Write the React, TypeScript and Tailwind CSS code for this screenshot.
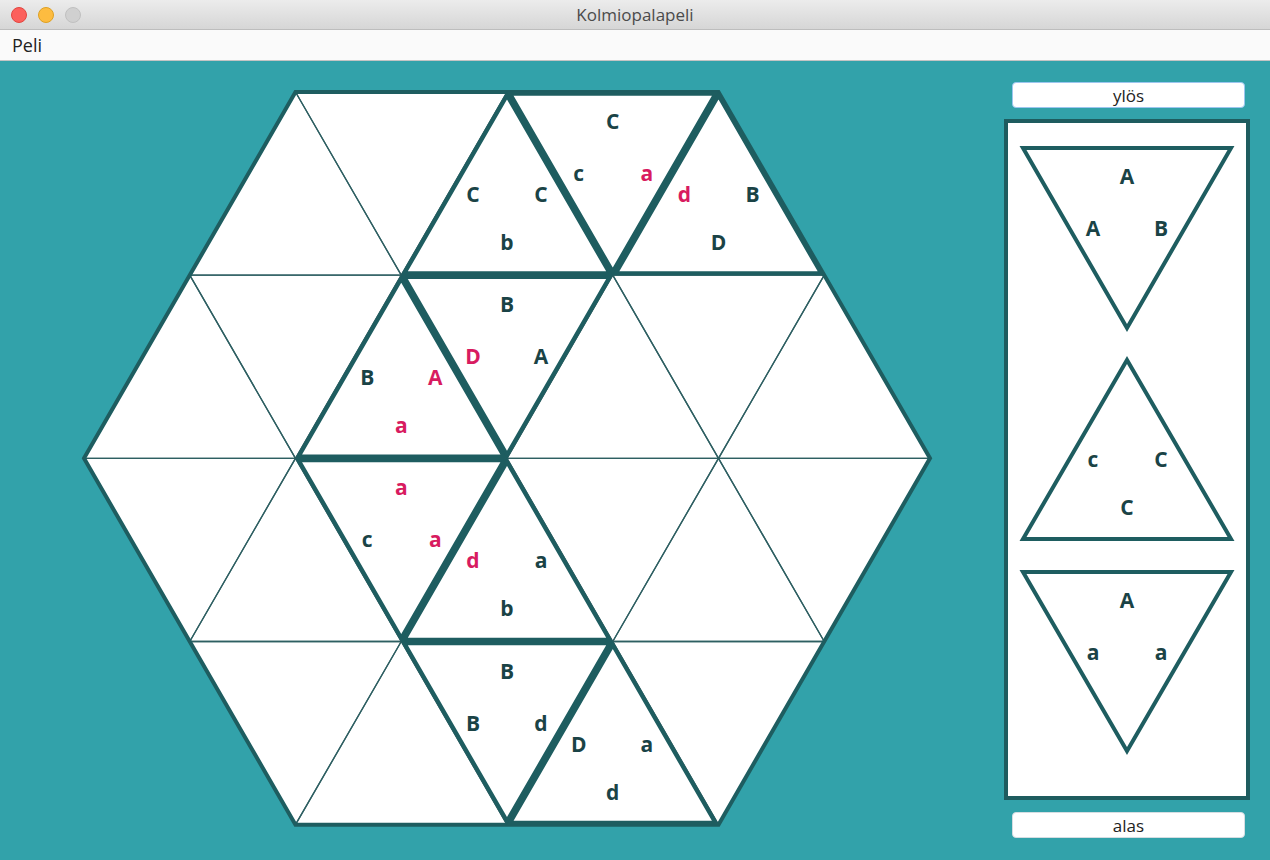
import React from 'react';

type Pt = [number, number];
type Label = { t: string; red?: boolean };
type Piece = { kind: 'up' | 'down'; pts: Pt[]; labels: Label[] };

const S = 211.5;
const H = (S * Math.sqrt(3)) / 2;
const CX = 507;
const Y0 = 92;
const COUNTS = [3, 4, 5, 4, 3];

const DARK = '#1e5d60';
const TEXT = '#1a4346';
const RED = '#d81b60';

// point j on grid level k
const P = (k: number, j: number): Pt => [CX + (j - (COUNTS[k] - 1) / 2) * S, Y0 + k * H];

const gridTriangles = (): Pt[][] => {
  const tris: Pt[][] = [];
  for (let r = 0; r < 4; r++) {
    const nTop = COUNTS[r];
    const nBot = COUNTS[r + 1];
    if (nBot > nTop) {
      for (let i = 0; i < nTop; i++) tris.push([P(r + 1, i), P(r, i), P(r + 1, i + 1)]);
      for (let i = 0; i < nTop - 1; i++) tris.push([P(r, i), P(r, i + 1), P(r + 1, i + 1)]);
    } else {
      for (let i = 0; i < nBot; i++) tris.push([P(r, i), P(r, i + 1), P(r + 1, i)]);
      for (let i = 0; i < nBot - 1; i++) tris.push([P(r + 1, i), P(r, i + 1), P(r + 1, i + 1)]);
    }
  }
  return tris;
};

const L = (t: string, red = false): Label => ({ t, red });

const pieces: Piece[] = [
  { kind: 'up', pts: [P(1, 1), P(0, 1), P(1, 2)], labels: [L('C'), L('C'), L('b')] },
  { kind: 'down', pts: [P(0, 1), P(0, 2), P(1, 2)], labels: [L('C'), L('c'), L('a', true)] },
  { kind: 'up', pts: [P(1, 2), P(0, 2), P(1, 3)], labels: [L('d', true), L('B'), L('D')] },
  { kind: 'up', pts: [P(2, 1), P(1, 1), P(2, 2)], labels: [L('B'), L('A', true), L('a', true)] },
  { kind: 'down', pts: [P(1, 1), P(1, 2), P(2, 2)], labels: [L('B'), L('D', true), L('A')] },
  { kind: 'down', pts: [P(2, 1), P(2, 2), P(3, 1)], labels: [L('a', true), L('c'), L('a', true)] },
  { kind: 'up', pts: [P(3, 1), P(2, 2), P(3, 2)], labels: [L('d', true), L('a'), L('b')] },
  { kind: 'down', pts: [P(3, 1), P(3, 2), P(4, 1)], labels: [L('B'), L('B'), L('d')] },
  { kind: 'up', pts: [P(4, 1), P(3, 2), P(4, 2)], labels: [L('D'), L('a'), L('d')] },
];

const toStr = (pts: Pt[]) => pts.map((p) => `${p[0]},${p[1]}`).join(' ');

const centroid = (pts: Pt[]): Pt => [
  (pts[0][0] + pts[1][0] + pts[2][0]) / 3,
  (pts[0][1] + pts[1][1] + pts[2][1]) / 3,
];

const UP_OFFSETS: Pt[] = [[-34, -20], [34, -20], [0, 28]];
const DOWN_OFFSETS: Pt[] = [[0, -32], [-34, 20], [34, 20]];

const PieceShape: React.FC<{ piece: Piece; inset?: number }> = ({ piece, inset = 1.8 }) => {
  const c = centroid(piece.pts);
  const inr = S / (2 * Math.sqrt(3));
  const f = (inr - inset) / inr;
  const shrunk = piece.pts.map((p) => [c[0] + (p[0] - c[0]) * f, c[1] + (p[1] - c[1]) * f] as Pt);
  const offs = piece.kind === 'up' ? UP_OFFSETS : DOWN_OFFSETS;
  return (
    <g>
      <polygon points={toStr(shrunk)} fill="none" stroke={DARK} strokeWidth={4} strokeLinejoin="miter" />
      {piece.labels.map((l, i) => (
        <text
          key={i}
          x={c[0] + offs[i][0]}
          y={c[1] + offs[i][1]}
          textAnchor="middle"
          dominantBaseline="central"
          fontFamily="'Open Sans', 'DejaVu Sans', sans-serif"
          fontWeight={700}
          fontSize={21}
          fill={l.red ? RED : TEXT}
        >
          {l.t}
        </text>
      ))}
    </g>
  );
};

const Board: React.FC = () => {
  const hex = [P(0, 0), P(0, 2), P(2, 4), P(4, 2), P(4, 0), P(2, 0)];
  return (
    <svg width={1004} height={799} viewBox="0 61 1004 799" className="block shrink-0">
      <polygon points={toStr(hex)} fill="#ffffff" />
      {gridTriangles().map((t, i) => (
        <polygon key={i} points={toStr(t)} fill="none" stroke="#2e5f62" strokeWidth={1.3} />
      ))}
      <polygon points={toStr(hex)} fill="none" stroke={DARK} strokeWidth={4} strokeLinejoin="miter" />
      {pieces.map((p, i) => (
        <PieceShape key={i} piece={p} />
      ))}
    </svg>
  );
};

const sidePieces: Piece[] = [
  { kind: 'down', pts: [[1023, 148], [1231, 148], [1127, 328]], labels: [L('A'), L('A'), L('B')] },
  { kind: 'up', pts: [[1023, 539], [1127, 360], [1231, 539]], labels: [L('c'), L('C'), L('C')] },
  { kind: 'down', pts: [[1023, 572], [1231, 572], [1127, 751]], labels: [L('A'), L('a'), L('a')] },
];

const SideTriangle: React.FC<{ piece: Piece }> = ({ piece }) => {
  const c = centroid(piece.pts);
  const offs = piece.kind === 'up' ? UP_OFFSETS : DOWN_OFFSETS;
  return (
    <g>
      <polygon points={toStr(piece.pts)} fill="none" stroke={DARK} strokeWidth={4} />
      {piece.labels.map((l, i) => (
        <text
          key={i}
          x={c[0] + offs[i][0]}
          y={c[1] + offs[i][1]}
          textAnchor="middle"
          dominantBaseline="central"
          fontFamily="'Open Sans', 'DejaVu Sans', sans-serif"
          fontWeight={700}
          fontSize={21}
          fill={TEXT}
        >
          {l.t}
        </text>
      ))}
    </g>
  );
};

const App: React.FC = () => {
  return (
    <div className="w-[1270px] h-[860px] overflow-hidden flex flex-col font-['Open_Sans',sans-serif]">
      {/* Window title bar */}
      <div className="relative h-[30px] shrink-0 flex items-center bg-gradient-to-b from-[#ececec] to-[#d6d6d6] border-b border-[#bdbdbd]">
        <div className="flex items-center gap-[11px] pl-[11px]">
          <span className="w-4 h-4 rounded-full bg-[#fc605c] border border-[#e2463f]" />
          <span className="w-4 h-4 rounded-full bg-[#fdbc40] border border-[#dea123]" />
          <span className="w-4 h-4 rounded-full bg-[#d0d0d0] border border-[#c0c0c0]" />
        </div>
        <div className="absolute inset-0 flex items-center justify-center text-[17px] text-[#4b4b4b]">
          Kolmiopalapeli
        </div>
      </div>

      {/* Menu bar */}
      <div className="h-[31px] shrink-0 flex items-center px-3 bg-[#fafafa] border-b border-[#c4c4c4] text-[18px] text-[#222]">
        Peli
      </div>

      {/* Game area */}
      <div className="flex-1 flex bg-[#32a2aa]">
        <Board />
        <div className="w-[246px] flex flex-col pt-[21px]">
          <button className="ml-2 mr-[5px] h-[26px] flex items-center justify-center bg-white rounded-[4px] border border-[#9cc6ef] text-[17px] text-[#222] leading-none">
            ylös
          </button>
          <div className="mt-[11px] h-[681px] border-4 border-[#1e5c5f] bg-white">
            <svg width={238} height={673} viewBox="1008 123 238 673" className="block">
              {sidePieces.map((p, i) => (
                <SideTriangle key={i} piece={p} />
              ))}
            </svg>
          </div>
          <button className="mt-3 ml-2 mr-[5px] h-[26px] flex items-center justify-center bg-white rounded-[4px] border border-[#d5dde2] text-[17px] text-[#222] leading-none">
            alas
          </button>
        </div>
      </div>
    </div>
  );
};

export default App;
